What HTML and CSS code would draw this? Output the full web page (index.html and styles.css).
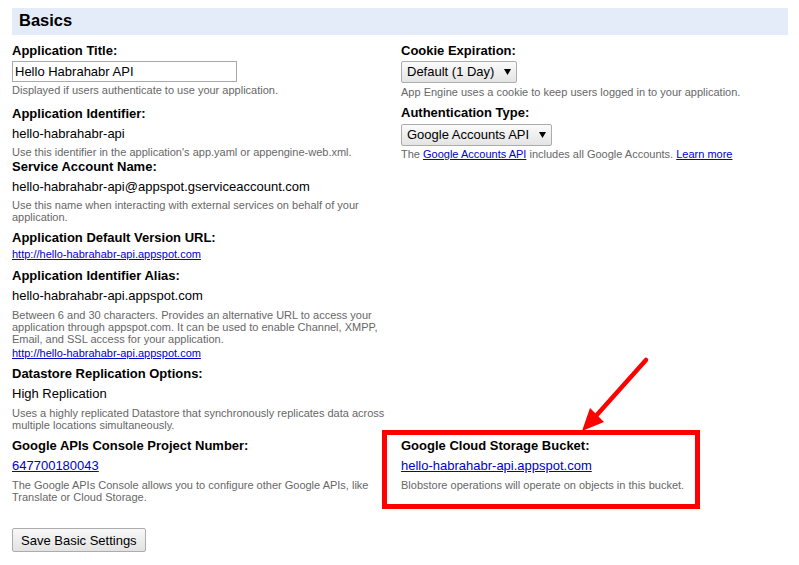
FILE: index.html
```html
<!DOCTYPE html>
<html>
<head>
<meta charset="utf-8">
<title>Basics</title>
<link rel="stylesheet" href="styles.css">
</head>
<body>
<div class="page">
  <h2 class="section-title">Basics</h2>
  <div class="settings">
    <div class="col">
      <div class="field">
        <div class="label">Application Title:</div>
        <input class="text-input" type="text" value="Hello Habrahabr API">
        <div class="help help-after-control">Displayed if users authenticate to use your application.</div>
      </div>
      <div class="field field-spaced">
        <div class="label">Application Identifier:</div>
        <div class="value">hello-habrahabr-api</div>
        <div class="help help-snug">Use this identifier in the application's app.yaml or appengine-web.xml.</div>
      </div>
      <div class="field field-snug">
        <div class="label">Service Account Name:</div>
        <div class="value">hello-habrahabr-api@appspot.gserviceaccount.com</div>
        <div class="help help-snug">Use this name when interacting with external services on behalf of your application.</div>
      </div>
      <div class="field">
        <div class="label">Application Default Version URL:</div>
        <a class="url" href="#">http://hello-habrahabr-api.appspot.com</a>
      </div>
      <div class="field field-after-link">
        <div class="label">Application Identifier Alias:</div>
        <div class="value">hello-habrahabr-api.appspot.com</div>
        <div class="help">Between 6 and 30 characters. Provides an alternative URL to access your application through appspot.com. It can be used to enable Channel, XMPP, Email, and SSL access for your application.</div>
        <a class="url url-after-help" href="#">http://hello-habrahabr-api.appspot.com</a>
      </div>
      <div class="field">
        <div class="label">Datastore Replication Options:</div>
        <div class="value">High Replication</div>
        <div class="help">Uses a highly replicated Datastore that synchronously replicates data across multiple locations simultaneously.</div>
      </div>
    </div>
    <div class="col">
      <div class="field">
        <div class="label">Cookie Expiration:</div>
        <div class="select"><span>Default (1 Day)</span><svg class="caret" width="7" height="6" viewBox="0 0 7 6"><path d="M0 0H7L3.5 6Z"/></svg></div>
        <div class="help help-after-select">App Engine uses a cookie to keep users logged in to your application.</div>
      </div>
      <div class="field">
        <div class="label">Authentication Type:</div>
        <div class="select select-low"><span>Google Accounts API</span><svg class="caret" width="7" height="6" viewBox="0 0 7 6"><path d="M0 0H7L3.5 6Z"/></svg></div>
        <div class="help help-after-control">The <a href="#">Google Accounts API</a> includes all Google Accounts. <a href="#">Learn more</a></div>
      </div>
    </div>
    <div class="col">
      <div class="field">
        <div class="label">Google APIs Console Project Number:</div>
        <div class="value"><a href="#">647700180043</a></div>
        <div class="help">The Google APIs Console allows you to configure other Google APIs, like Translate or Cloud Storage.</div>
      </div>
    </div>
    <div class="col bucket">
      <div class="field">
        <div class="label">Google Cloud Storage Bucket:</div>
        <div class="value"><a href="#">hello-habrahabr-api.appspot.com</a></div>
        <div class="help">Blobstore operations will operate on objects in this bucket.</div>
      </div>
      <div class="callout-box"></div>
      <svg class="callout-arrow" width="80" height="80" viewBox="0 0 80 80">
        <line x1="71" y1="5" x2="20" y2="62" stroke="#ff0000" stroke-width="4.5" stroke-linecap="round"/>
        <path d="M7 76 L15 53 L29 67 Z" fill="#ff0000"/>
      </svg>
    </div>
  </div>
  <button class="btn" type="button">Save Basic Settings</button>
</div>
</body>
</html>
```
FILE: styles.css
```css
body {
  margin: 0;
  background: #ffffff;
  color: #000000;
  font-family: "Liberation Sans", Arial, sans-serif;
}

.page {
  padding: 8px 11px 0 12px;
}

.section-title {
  margin: 0;
  background: #e5ecf9;
  font-size: 16.5px;
  font-weight: bold;
  line-height: 25px;
  padding: 0 7px 2px;
}

.settings {
  display: grid;
  grid-template-columns: 389px 1fr;
  row-gap: 6px;
  margin-top: 6px;
}

.field {
  margin-top: 6px;
}

.settings > .col:nth-child(-n+2) > .field:first-child {
  margin-top: 1px;
}

.settings > .col:nth-child(n+3) > .field:first-child {
  margin-top: 0;
}

.col > .field-spaced {
  margin-top: 9px;
}

.col > .field-snug {
  margin-top: 0;
}

.col > .field-after-link {
  margin-top: 7px;
}

.label {
  font-size: 13px;
  font-weight: bold;
  line-height: 15px;
  padding-top: 1px;
}

.value {
  font-size: 13px;
  line-height: 15px;
  padding-top: 1px;
  margin-top: 4px;
}

.help {
  font-size: 11px;
  line-height: 12px;
  color: #676767;
  margin-top: 6px;
}

.help-snug {
  margin-top: 5px;
}

.help-after-control {
  margin-top: 2px;
}

.help-after-select {
  margin-top: 3px;
}

a {
  color: #0000cc;
  text-decoration: underline;
}

.url {
  display: block;
  width: fit-content;
  font-size: 11px;
  line-height: 12px;
  margin-top: 3px;
}

.url-after-help {
  margin-top: 2px;
}

.text-input {
  display: block;
  box-sizing: border-box;
  width: 225px;
  height: 21px;
  margin: 3px 0 0;
  padding: 0 2px;
  border: 1px solid #a9a9a9;
  font-family: "Liberation Sans", Arial, sans-serif;
  font-size: 13px;
  color: #000000;
  background: #ffffff;
}

.select {
  display: flex;
  align-items: center;
  gap: 10px;
  width: fit-content;
  box-sizing: border-box;
  height: 22px;
  margin-top: 3px;
  padding: 0 5px;
  border: 1px solid #acacac;
  border-radius: 2px;
  background: linear-gradient(#fafafa, #e4e4e4);
  font-size: 13px;
  line-height: 16px;
}

.select-low {
  margin-top: 4px;
}

.caret {
  display: block;
  fill: #000000;
}

.bucket {
  position: relative;
}

.callout-box {
  position: absolute;
  left: -19px;
  top: -7px;
  width: 318px;
  height: 79px;
  box-sizing: border-box;
  border: 5px solid #ff0000;
  pointer-events: none;
}

.callout-arrow {
  position: absolute;
  left: 174px;
  top: -82px;
  overflow: visible;
}

.btn {
  display: block;
  margin-top: 25px;
  height: 24px;
  padding: 0 8px;
  border: 1px solid #acacac;
  border-radius: 2px;
  background: linear-gradient(#f8f8f8, #e2e2e2);
  font-family: "Liberation Sans", Arial, sans-serif;
  font-size: 13px;
  color: #000000;
}
```
